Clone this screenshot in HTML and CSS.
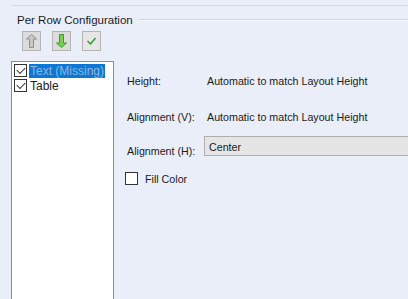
FILE: index.html
```html
<!DOCTYPE html>
<html>
    <head>
        <title>Per Row Configuration</title>
        <link rel="stylesheet" href="styles.css">
    </head>
    <body>
        <div class="topline"></div>

        <div class="group">
            <span class="legend">Per Row Configuration</span>
            <span class="rule"></span>
        </div>

        <div class="toolbar">
            <button class="tool" disabled>
                <svg width="11" height="14" viewBox="0 0 11 14">
                    <path d="M5.5 0.5 L10.5 5 L7.5 5 L7.5 13.5 L3.5 13.5 L3.5 5 L0.5 5 Z" fill="#c9c9c9" stroke="#8e8e8e" stroke-width="1"/>
                </svg>
            </button>
            <button class="tool">
                <svg width="11" height="14" viewBox="0 0 11 14">
                    <path d="M5.5 13.5 L10.5 9 L7.5 9 L7.5 0.5 L3.5 0.5 L3.5 9 L0.5 9 Z" fill="#7ccd5a" stroke="#3f9a2c" stroke-width="1"/>
                </svg>
            </button>
            <button class="tool tool-light">
                <svg width="11" height="10" viewBox="0 0 11 10">
                    <path d="M1.5 5 L4.5 8 L9.5 2" fill="none" stroke="#2f9a2f" stroke-width="1.5"/>
                </svg>
            </button>
        </div>

        <div class="main">
            <div class="list">
                <div class="item">
                    <span class="check on"></span>
                    <span class="item-text selected">Text (Missing)</span>
                </div>
                <div class="item">
                    <span class="check on"></span>
                    <span class="item-text">Table</span>
                </div>
            </div>

            <div class="props">
                <div class="row row-height">
                    <span class="label">Height:</span>
                    <span class="value">Automatic to match Layout Height</span>
                </div>
                <div class="row row-valign">
                    <span class="label">Alignment (V):</span>
                    <span class="value">Automatic to match Layout Height</span>
                </div>
                <div class="row row-halign">
                    <span class="label label-low">Alignment (H):</span>
                    <div class="combo">Center</div>
                </div>
                <div class="fill">
                    <span class="check"></span>
                    <span>Fill Color</span>
                </div>
            </div>
        </div>
    </body>
</html>
```

FILE: styles.css
```css
html, body {
    margin: 0;
    height: 100%;
    overflow: hidden;
}

body {
    background-color: #eaeef9;
    font-family: "Liberation Sans", Arial, sans-serif;
    font-size: 10.7px;
    color: #1b1b1b;
}

.topline {
    margin: 5px 0 0 12px;
    border-top: 1px solid #d3d8e6;
}

.group {
    display: flex;
    align-items: center;
    margin-top: 7px;
    padding-left: 17px;
    height: 14px;
}

.legend {
    white-space: nowrap;
    font-size: 11.5px;
}

.rule {
    flex: 1;
    margin-left: 6px;
    border-top: 1px solid #d0d4df;
    border-bottom: 1px solid #f4f6fc;
}

.toolbar {
    display: flex;
    gap: 11px;
    margin-top: 4px;
    padding-left: 22px;
}

.tool {
    width: 19px;
    height: 20px;
    padding: 0;
    display: flex;
    align-items: center;
    justify-content: center;
    background-color: #dcdcdc;
    border: 1px solid #b4b4b4;
}

.tool-light {
    background-color: #e6e6e6;
}

.main {
    display: flex;
    margin-top: 10px;
    height: 239px;
}

.list {
    margin-left: 11px;
    width: 101px;
    background-color: #ffffff;
    border: 1px solid #8c8c8c;
    border-bottom: none;
    padding-top: 1px;
}

.item {
    display: flex;
    align-items: center;
    height: 15px;
    padding-left: 2px;
}

.check {
    width: 11px;
    height: 11px;
    border: 1px solid #333333;
    background-color: #ffffff;
    position: relative;
    flex: none;
}

.check.on::after {
    content: "";
    position: absolute;
    width: 7px;
    height: 4px;
    border-left: 1px solid #333333;
    border-bottom: 1px solid #333333;
    transform: rotate(-45deg);
    top: 2px;
    left: 1.5px;
}

.item-text {
    margin-left: 2px;
    padding: 0 1px;
    line-height: 14px;
    font-size: 12px;
}

.item-text.selected {
    background-color: #0a78d4;
    color: #8fb6de;
}

.props {
    flex: 1;
    padding-left: 13px;
}

.row {
    display: flex;
    align-items: center;
}

.label {
    width: 80px;
}

.row-height {
    margin-top: 14px;
}

.row-valign {
    margin-top: 24px;
}

.row-halign {
    margin-top: 13px;
    align-items: flex-start;
}

.label-low {
    margin-top: 9px;
}

.combo {
    flex: 1;
    height: 20px;
    margin-left: -3px;
    padding: 4px 0 0 4px;
    background-color: #e5e5e5;
    border: 1px solid #adadad;
    border-right: none;
    box-sizing: border-box;
}

.fill {
    display: flex;
    align-items: center;
    gap: 7px;
    margin-top: 15px;
    margin-left: -2px;
}
```
